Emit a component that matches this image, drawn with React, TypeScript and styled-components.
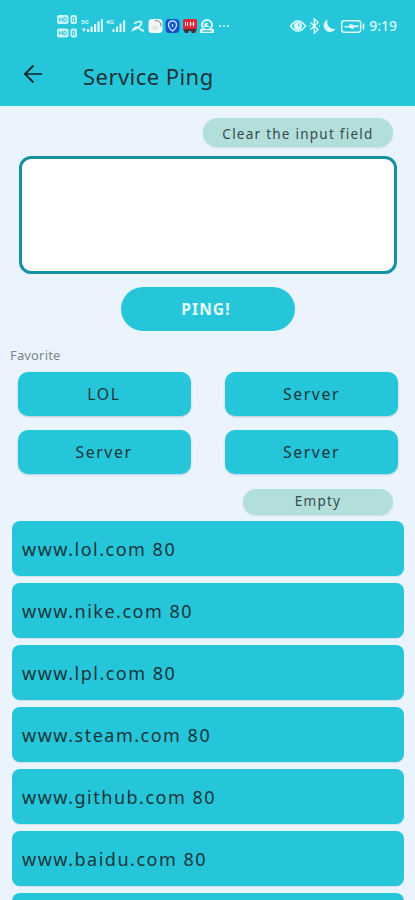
import React from 'react';
import styled, { createGlobalStyle } from 'styled-components';

const GlobalStyle = createGlobalStyle`
  * { box-sizing: border-box; }
  html, body { margin: 0; height: 100%; overflow: hidden; background: #ebf4fd; }
  button, textarea { font: inherit; margin: 0; padding: 0; border: 0; }
`;

const Screen = styled.div`
  width: 415px;
  height: 900px;
  overflow: hidden;
  display: flex;
  flex-direction: column;
  background: #ebf4fd;
  font-family: 'Noto Sans', sans-serif;
  color: #1c3539;
`;

const Header = styled.header`
  flex: none;
  height: 106px;
  background: #26c6da;
`;

const StatusBar = styled.div`
  height: 46px;
  padding: 6px 18px 0 56px;
  display: flex;
  align-items: center;
  justify-content: space-between;
  color: #dcf8fc;
`;

const StatusIcons = styled.svg`
  display: block;
  flex: none;
`;

const SimLabel = styled.text`
  font: 700 6px 'Noto Sans', sans-serif;
`;

const StatusRight = styled.div`
  display: flex;
  align-items: center;
  gap: 4px;
`;

const Clock = styled.span`
  font-size: 14px;
  line-height: 20px;
  font-weight: 500;
  white-space: nowrap;
`;

const TitleBar = styled.div`
  height: 60px;
  padding-left: 23px;
  display: flex;
  align-items: center;
`;

const BackButton = styled.button`
  width: 20px;
  height: 20px;
  margin: -4px 40px 0 0;
  background: none;
  color: #102b30;
`;

const Title = styled.h1`
  margin: 0;
  font-size: 22px;
  line-height: 30px;
  font-weight: 400;
  letter-spacing: 0.45px;
  color: #1a3236;
`;

const Content = styled.main`
  flex: none;
  display: flex;
  flex-direction: column;
  padding: 12px 11px 0 12px;
`;

const PillButton = styled.button<{ $width: number; $height: number; $shift: number }>`
  align-self: flex-end;
  width: ${(p) => p.$width}px;
  height: ${(p) => p.$height}px;
  margin-right: 11px;
  padding-top: ${(p) => Math.max(p.$shift, 0)}px;
  padding-bottom: ${(p) => Math.max(-p.$shift, 0)}px;
  border-radius: 15px;
  background: #b2dfdb;
  color: #354b4d;
  font-size: 13.5px;
  line-height: 20px;
  letter-spacing: 1.25px;
  box-shadow: 0 1px 2px rgba(80, 130, 140, 0.2);
`;

const HostInput = styled.textarea`
  display: block;
  width: 378px;
  height: 118px;
  margin: 9px 0 0 7px;
  padding: 10px;
  resize: none;
  outline: none;
  border: 3px solid #16919f;
  border-radius: 12px;
  background: #fff;
`;

const PingButton = styled.button`
  width: 174px;
  height: 44px;
  margin: 13px 0 0 109px;
  padding-right: 4px;
  border-radius: 22px;
  background: #26c6da;
  color: #e6fbfd;
  font-size: 15.5px;
  font-weight: 700;
  letter-spacing: 1.1px;
`;

const SectionLabel = styled.h2`
  margin: 15px 0 8px -2px;
  font-size: 13px;
  line-height: 18px;
  font-weight: 400;
  letter-spacing: 0.15px;
  color: #7b868c;
`;

const FavoriteGrid = styled.div`
  display: grid;
  grid-template-columns: 173px 173px;
  grid-auto-rows: 44px;
  gap: 14px 34.5px;
  margin: 0 0 15px 5.5px;
`;

const FavoriteButton = styled.button`
  border-radius: 10px;
  background: #26c6da;
  color: #1c3539;
  font-size: 15.8px;
  letter-spacing: 1.6px;
  box-shadow: 0 1px 2px rgba(60, 120, 140, 0.3);
`;

const HostList = styled.ul`
  list-style: none;
  margin: 5.5px 0 0;
  padding: 0;
  display: flex;
  flex-direction: column;
  gap: 6.5px;
`;

const HostRow = styled.li`
  height: 55.5px;
  padding: 1px 10px 0;
  display: flex;
  align-items: center;
  border-radius: 8px;
  background: #26c6da;
  color: #1c3539;
  font-size: 18px;
  letter-spacing: 1.5px;
  box-shadow: 0 1px 1px rgba(60, 120, 140, 0.15);
`;

const favorites = ['LOL', 'Server', 'Server', 'Server'];
const hosts = [
  'www.lol.com 80',
  'www.nike.com 80',
  'www.lpl.com 80',
  'www.steam.com 80',
  'www.github.com 80',
  'www.baidu.com 80',
  '',
];

const NetworkIcons = () => (
  <StatusIcons width="176" height="26" viewBox="56 13 176 26" fill="currentColor">
    {[15, 28.5].map((y) => (
      <g key={y}>
        <rect x="57" y={y} width="11.5" height="9" rx="2" opacity="0.9" />
        <path d={`M59.4 ${y + 2.5}v4m2.8-4v4m-2.8-2h2.8m1.7-2v4h1.2q1.4-.2 1.4-2t-1.4-2z`} fill="none" stroke="#26c6da" strokeWidth="0.9" />
        <rect x="70.5" y={y} width="6.5" height="9" rx="2" opacity="0.9" />
        <path d={`M72.6 ${y + 2.5}h2v4h-2z`} fill="none" stroke="#26c6da" strokeWidth="0.9" />
      </g>
    ))}
    <SimLabel x="81" y="24">5G</SimLabel>
    <path d="M82 28.5h4l-2 3.5zM87 29h2.2v3H87zM90.5 26.5h2.2V32h-2.2zM94 24h2.2v8H94zM97.5 21.5h2.2V32h-2.2zM101 19h1.8v13H101z" />
    <SimLabel x="106" y="24">4G</SimLabel>
    <path d="M112.5 29h2v3h-2zM116 26.5h2V32h-2zM119.5 23.5h2V32h-2zM123 20.5h2.2V32H123z" />
    <path d="M134 23.5q7.5-4 7.5-.5t-8.500 7q2-4 5.500-2.500 2.500 3 5.500 3.500" fill="none" stroke="currentColor" strokeWidth="1.8" />
    <rect x="148.5" y="19" width="14" height="14" rx="3.5" fill="#f4f8f7" />
    <path d="M155 20.5c4.5 0 6 2 6 6" fill="none" stroke="#65777d" strokeWidth="1" />
    <rect x="152" y="25" width="6" height="5" rx="2" fill="#e1e9eb" />
    <rect x="165.5" y="19" width="14" height="14" rx="4" fill="#1550cc" />
    <path d="M172.500 21q-4 0-4 4 0 3 4 6 4-3 4-6 0-4-4-4zm0 3v3" fill="none" stroke="#bce4ff" strokeWidth="1.3" />
    <rect x="183" y="19" width="14" height="10" rx="1.5" fill="#e32434" />
    <path d="M185.5 22v4m2-4v4m2-2h5m-4-2.5v5m3-5v5" fill="none" stroke="#ffe7e7" strokeWidth="1" />
    <path d="M183 29h14l-2 4h-3l-1-2h-2l-1 2h-3z" fill="#47313c" />
    <circle cx="207" cy="25" r="5" fill="none" stroke="currentColor" strokeWidth="2" />
    <path d="M204 27q0-5 4-4l-1 2 3 2m-10 2h14v4h-14z" fill="#d8faff" />
    <path d="M202.5 31h9" stroke="#1594b2" />
    <circle cx="220" cy="26" r="1" />
    <circle cx="224" cy="26" r="1" />
    <circle cx="228" cy="26" r="1" />
  </StatusIcons>
);

const DeviceIcons = () => (
  <StatusIcons width="76" height="20" viewBox="288 16 76 20" fill="none" stroke="currentColor">
    <path d="M289.500 26q7.500-10 15 0-7.500 10-15 0z" strokeWidth="1.6" />
    <circle cx="297" cy="26" r="3.6" fill="currentColor" />
    <path d="M297.500 23.500v2.500h2" stroke="#26c6da" strokeWidth="0.9" />
    <path d="m309.5 22.5 7.5 7-3.7 3.5V19l3.7 3.5-7.5 7M308 26h1m9 0h1" strokeWidth="1.5" />
    <path d="M326.500 19.500a6.500 6.500 0 1 0 8.200 9.300c-5.200 1.500-9.800-3.600-8.200-9.300z" fill="currentColor" stroke="none" />
    <rect x="340.7" y="20.7" width="19" height="11.6" rx="2.5" strokeWidth="1.5" />
    <path d="M362.5 23.5v6" strokeWidth="1.6" />
    <path d="M343.5 26h5v-2.2l5 1.4h4v2h-5v2.3l-5-2h-4z" fill="currentColor" stroke="none" />
  </StatusIcons>
);

const BackArrow = () => (
  <svg width="20" height="20" viewBox="0 0 20 20" fill="none" stroke="currentColor" strokeWidth="2">
    <path d="M10.5 1.5 2 10l8.5 8.5" />
    <path d="M2 10h17" strokeWidth="1.6" />
  </svg>
);

export default function App() {
  return (
    <>
      <GlobalStyle />
      <Screen>
        <Header>
          <StatusBar>
            <NetworkIcons />
            <StatusRight>
              <DeviceIcons />
              <Clock>9:19</Clock>
            </StatusRight>
          </StatusBar>
          <TitleBar>
            <BackButton aria-label="Back"><BackArrow /></BackButton>
            <Title>Service Ping</Title>
          </TitleBar>
        </Header>
        <Content>
          <PillButton $width={190} $height={29} $shift={2}>Clear the input field</PillButton>
          <HostInput aria-label="Host and port" />
          <PingButton>PING!</PingButton>
          <SectionLabel>Favorite</SectionLabel>
          <FavoriteGrid>
            {favorites.map((name, index) => (
              <FavoriteButton key={index}>{name}</FavoriteButton>
            ))}
          </FavoriteGrid>
          <PillButton $width={150} $height={26} $shift={-2}>Empty</PillButton>
          <HostList>
            {hosts.map((host, index) => (
              <HostRow key={index}>{host}</HostRow>
            ))}
          </HostList>
        </Content>
      </Screen>
    </>
  );
}
